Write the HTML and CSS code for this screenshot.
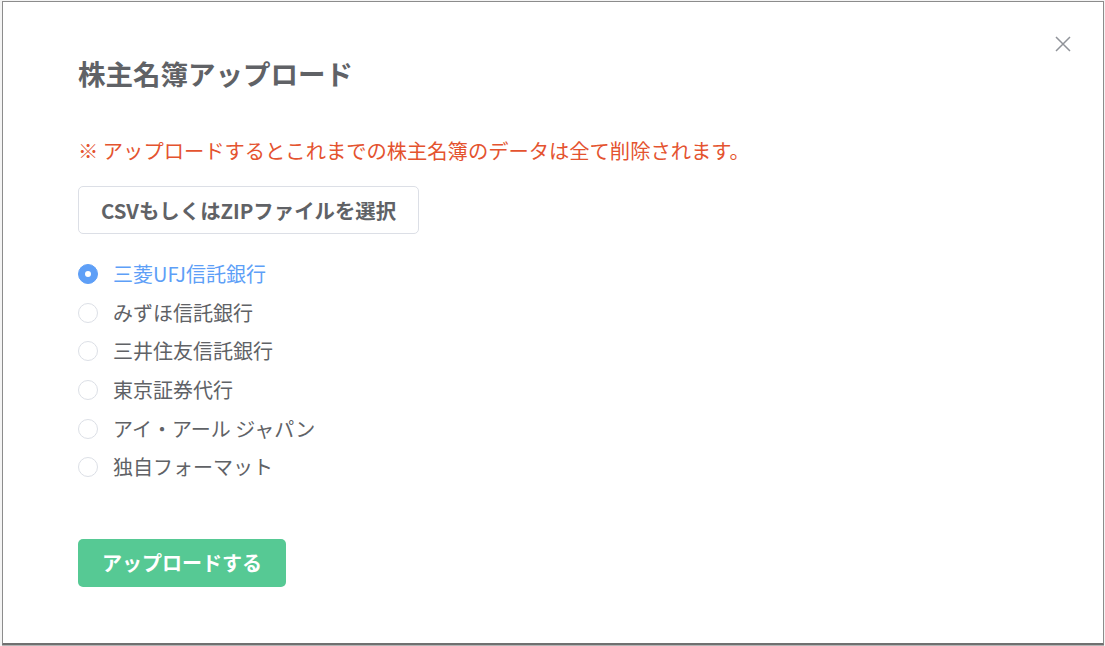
FILE: index.html
```html
<!DOCTYPE html>
<html lang="ja">
<head>
<meta charset="utf-8">
<title>株主名簿アップロード</title>
<link rel="stylesheet" href="styles.css">
</head>
<body>
<div class="frame">
  <button class="close" aria-label="閉じる">
    <svg width="16" height="16" viewBox="0 0 16 16"><path d="M1 1 L15 15 M15 1 L1 15" stroke="#909399" stroke-width="1.5" fill="none"/></svg>
  </button>
  <h1 class="title">株主名簿アップロード</h1>
  <p class="note">※ アップロードするとこれまでの株主名簿のデータは全て削除されます。</p>
  <button class="file-btn">CSVもしくはZIPファイルを選択</button>
  <ul class="radios">
    <li class="radio checked"><span class="dot"></span><span class="label">三菱UFJ信託銀行</span></li>
    <li class="radio"><span class="dot"></span><span class="label">みずほ信託銀行</span></li>
    <li class="radio"><span class="dot"></span><span class="label">三井住友信託銀行</span></li>
    <li class="radio"><span class="dot"></span><span class="label">東京証券代行</span></li>
    <li class="radio"><span class="dot"></span><span class="label">アイ・アール ジャパン</span></li>
    <li class="radio"><span class="dot"></span><span class="label">独自フォーマット</span></li>
  </ul>
  <button class="upload-btn">アップロードする</button>
</div>
</body>
</html>
```
FILE: styles.css
```css
html, body {
  margin: 0;
  padding: 0;
  background: #f4f4f4;
}
body {
  font-family: "Noto Sans CJK JP", "Noto Sans", sans-serif;
  width: 1105px;
  height: 646px;
  overflow: hidden;
}
.frame {
  position: relative;
  box-sizing: border-box;
  margin: 1px 0 0 2px;
  width: 1102px;
  height: 644px;
  background: #fff;
  border: 1px solid #8c8c8c;
  border-bottom: 2px solid #707070;
  box-shadow: 0 1px 0 #b5b5b5;
  padding: 56px 0 0 75px;
  display: flex;
  flex-direction: column;
  align-items: flex-start;
}
.close {
  position: absolute;
  top: 33px;
  right: 31px;
  width: 18px;
  height: 18px;
  padding: 1px;
  border: 0;
  background: none;
  display: flex;
  align-items: center;
  justify-content: center;
}
.title {
  margin: 0;
  font-size: 27.5px;
  line-height: 30px;
  font-weight: 700;
  color: #606266;
  white-space: nowrap;
}
.note {
  margin: 48px 0 0;
  font-size: 20.3px;
  line-height: 28px;
  color: #e4532f;
  white-space: nowrap;
}
.file-btn {
  margin-top: 22px;
  box-sizing: border-box;
  width: 341px;
  height: 48px;
  border: 1px solid #dcdfe6;
  border-radius: 5px;
  background: #fff;
  font-family: inherit;
  font-size: 20.4px;
  font-weight: 700;
  color: #606266;
  padding: 0;
  white-space: nowrap;
}
.radios {
  list-style: none;
  margin: 21px 0 0;
  padding: 0;
}
.radio {
  height: 38.6px;
  display: flex;
  align-items: center;
  gap: 15px;
}
.dot {
  box-sizing: border-box;
  width: 20px;
  height: 20px;
  border-radius: 50%;
  border: 1px solid #dcdfe6;
  background: #fff;
  display: flex;
  align-items: center;
  justify-content: center;
}
.checked .dot {
  border-color: #5e9ff7;
  background: #5e9ff7;
}
.checked .dot::after {
  content: "";
  width: 6px;
  height: 6px;
  border-radius: 50%;
  background: #fff;
}
.label {
  font-size: 20px;
  line-height: 28px;
  color: #606266;
}
.checked .label {
  color: #5e9ff7;
}
.upload-btn {
  margin-top: 52px;
  width: 208px;
  height: 48px;
  border: 0;
  border-radius: 5px;
  background: #56c994;
  color: #fff;
  font-family: inherit;
  font-size: 20px;
  font-weight: 700;
  padding: 0;
}
```
